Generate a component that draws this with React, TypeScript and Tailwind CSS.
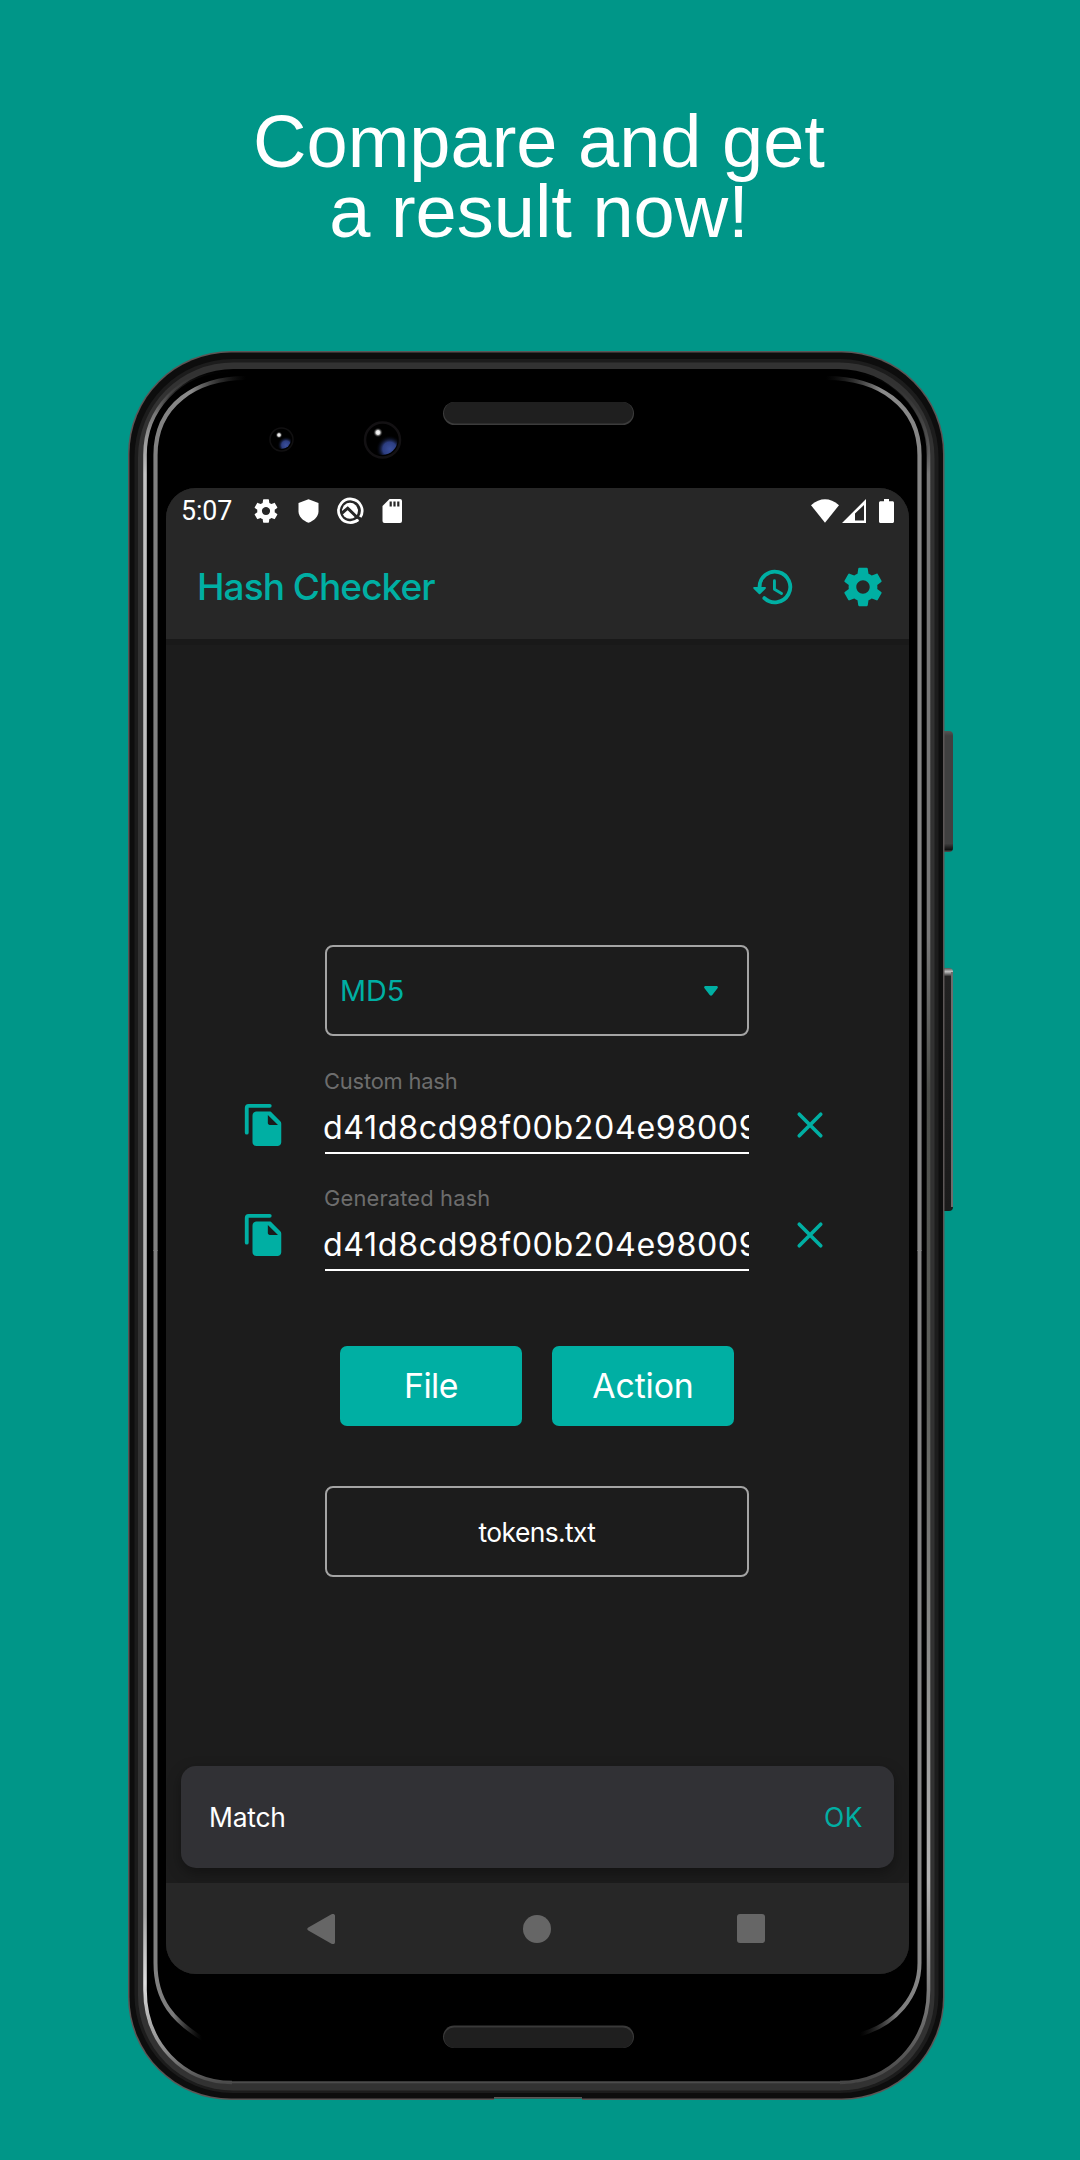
import type { ReactNode } from "react";

const GEAR =
  "M19.43 12.98c.04-.32.07-.64.07-.98s-.03-.66-.07-.98l2.11-1.65c.19-.15.24-.42.12-.64l-2-3.46c-.12-.22-.39-.3-.61-.22l-2.49 1c-.52-.4-1.08-.73-1.69-.98l-.38-2.65C14.46 2.18 14.25 2 14 2h-4c-.25 0-.46.18-.49.42l-.38 2.65c-.61.25-1.17.59-1.69.98l-2.49-1c-.23-.09-.49 0-.61.22l-2 3.46c-.13.22-.07.49.12.64l2.11 1.65c-.04.32-.07.65-.07.98s.03.66.07.98l-2.11 1.65c-.19.15-.24.42-.12.64l2 3.46c.12.22.39.3.61.22l2.49-1c.52.4 1.08.73 1.69.98l.38 2.65c.03.24.24.42.49.42h4c.25 0 .46-.18.49-.42l.38-2.65c.61-.25 1.17-.59 1.69-.98l2.49 1c.23.09.49 0 .61-.22l2-3.46c.12-.22.07-.49-.12-.64l-2.11-1.65zM12 15.5c-1.93 0-3.5-1.57-3.5-3.5s1.57-3.5 3.5-3.5 3.5 1.57 3.5 3.5-1.57 3.5-3.5 3.5z";

function Icon({ className, children }: { className: string; children: ReactNode }) {
  return (
    <svg viewBox="0 0 24 24" fill="currentColor" className={`shrink-0 ${className}`}>
      {children}
    </svg>
  );
}

function HistoryIcon() {
  return (
    <Icon className="size-[46px]">
      <path d="M5 12.2a8 8 0 1 1 2.5 5.6" fill="none" stroke="currentColor" strokeWidth="2" strokeLinecap="round" />
      <path d="M2.2 12h5.6c.45 0 .67.54.35.85l-2.8 2.8a.5.5 0 0 1-.7 0l-2.8-2.8c-.32-.31-.1-.85.35-.85z" />
      <path d="M12.75 8.7v4.5l3.7 2.2" fill="none" stroke="currentColor" strokeWidth="1.5" strokeLinecap="round" strokeLinejoin="round" />
    </Icon>
  );
}

function CopyIcon() {
  return (
    <Icon className="size-[46px]">
      <path d="M3 16V3a1 1 0 0 1 1-1h11" fill="none" stroke="currentColor" strokeWidth="2" strokeLinecap="round" />
      <path
        fillRule="evenodd"
        d="M15.2 5H8c-1.100 0-2 .9-2 2v14c0 1.100.9 2 2 2h11c1.100 0 2-.9 2-2V11.200c0-.4-.2-.8-.5-1.100l-4.400-4.500c-.3-.4-.6-.6-.9-.6zM14 11V6.800L19.300 12H15c-.55 0-1-.45-1-1z"
      />
    </Icon>
  );
}

function CloseIcon() {
  return (
    <Icon className="size-[46px]">
      <path d="M6.400 6.400l11.200 11.200M17.600 6.400L6.400 17.600" fill="none" stroke="currentColor" strokeWidth="1.900" strokeLinecap="round" />
    </Icon>
  );
}

/* Phone body: nested rounded shells, edge reflections, cameras, speakers and side keys. */
function PhoneBody() {
  return (
    <svg viewBox="0 0 826 1749" className="absolute top-0 left-0 h-[1749px] w-[826px]">
      <defs>
        <linearGradient id="rimL" x1="0" y1="20" x2="0" y2="1735" gradientUnits="userSpaceOnUse">
          <stop offset="0" stopColor="#333" stopOpacity="0" />
          <stop offset="0.025" stopColor="#777" />
          <stop offset="0.06" stopColor="#c4c4c4" />
          <stop offset="0.9" stopColor="#a8a8a8" />
          <stop offset="0.94" stopColor="#dedede" />
          <stop offset="0.98" stopColor="#888" />
          <stop offset="1" stopColor="#444" />
        </linearGradient>
        <linearGradient id="rimR" x1="0" y1="20" x2="0" y2="1735" gradientUnits="userSpaceOnUse">
          <stop offset="0" stopColor="#333" stopOpacity="0" />
          <stop offset="0.06" stopColor="#777" />
          <stop offset="0.33" stopColor="#777" />
          <stop offset="0.42" stopColor="#4a4c48" />
          <stop offset="0.6" stopColor="#5e605c" />
          <stop offset="0.88" stopColor="#b4b4b4" />
          <stop offset="0.95" stopColor="#777" />
          <stop offset="1" stopColor="#444" />
        </linearGradient>
        <linearGradient id="glassL" x1="27" y1="0" x2="118" y2="0" gradientUnits="userSpaceOnUse">
          <stop offset="0" stopColor="#808080" />
          <stop offset="0.4" stopColor="#8a8a8a" />
          <stop offset="1" stopColor="#333" stopOpacity="0" />
        </linearGradient>
        <linearGradient id="glassR" x1="790" y1="0" x2="698" y2="0" gradientUnits="userSpaceOnUse">
          <stop offset="0" stopColor="#868686" />
          <stop offset="0.4" stopColor="#8a8a8a" />
          <stop offset="1" stopColor="#333" stopOpacity="0" />
        </linearGradient>
        <linearGradient id="glassBL" x1="27" y1="0" x2="74" y2="0" gradientUnits="userSpaceOnUse">
          <stop offset="0" stopColor="#808080" />
          <stop offset="0.4" stopColor="#7a7a7a" />
          <stop offset="1" stopColor="#333" stopOpacity="0" />
        </linearGradient>
        <linearGradient id="glassBR" x1="792" y1="0" x2="732" y2="0" gradientUnits="userSpaceOnUse">
          <stop offset="0" stopColor="#868686" />
          <stop offset="0.4" stopColor="#7a7a7a" />
          <stop offset="1" stopColor="#333" stopOpacity="0" />
        </linearGradient>
        <radialGradient id="lens" cx="0.74" cy="0.8" r="0.46">
          <stop offset="0" stopColor="#3a4f9c" />
          <stop offset="0.5" stopColor="#2c3d80" />
          <stop offset="1" stopColor="#000" stopOpacity="0" />
        </radialGradient>
        <radialGradient id="glint">
          <stop offset="0" stopColor="#fff" />
          <stop offset="0.4" stopColor="#ddd" />
          <stop offset="1" stopColor="#000" stopOpacity="0" />
        </radialGradient>
        <linearGradient id="keyTop" x1="0" y1="0" x2="0" y2="1">
          <stop offset="0" stopColor="#555" />
          <stop offset="0.04" stopColor="#404040" />
          <stop offset="0.93" stopColor="#404040" />
          <stop offset="0.98" stopColor="#111" />
          <stop offset="1" stopColor="#555" />
        </linearGradient>
        <linearGradient id="keyLow" x1="0" y1="0" x2="0" y2="1">
          <stop offset="0" stopColor="#555" />
          <stop offset="0.015" stopColor="#c0c0c0" />
          <stop offset="0.035" stopColor="#222" />
          <stop offset="1" stopColor="#1b1b1b" />
        </linearGradient>
      </defs>

      <rect x="808" y="380" width="17" height="121" rx="4" fill="url(#keyTop)" />
      <rect x="808" y="617" width="17" height="243" rx="4" fill="url(#keyLow)" />
      <path d="M824 621v235" stroke="#6c6c6c" strokeWidth="2" />

      <rect width="816.500" height="1749" rx="103" fill="#5c5656" />
      <rect x="1.500" y="1.500" width="813.500" height="1746" rx="101.500" fill="#0d0d0d" />
      <rect x="6.500" y="8" width="804" height="1734" rx="98" fill="#1c1c1c" />
      <rect x="10" y="11.500" width="796.500" height="1728" rx="95" fill="#323232" />
      <rect x="15.500" y="18" width="785" height="1715" rx="90" fill="#000" />
      <path
        d="M100 19.500C50 21 17 60 17 104V1639C17 1692 55 1731.500 104 1731.500"
        fill="none"
        stroke="url(#rimL)"
        strokeWidth="3.600"
      />
      <path
        d="M716 19.500C766 21 800.500 60 800.500 104V1639C800.500 1692 762 1731.500 712 1731.500"
        fill="none"
        stroke="url(#rimR)"
        strokeWidth="3.600"
      />
      <path d="M104 1731.500H712" stroke="#4c4c4c" strokeWidth="2.500" />
      <path d="M118 27C68 27 27.500 54 27.500 104V900" fill="none" stroke="url(#glassL)" strokeWidth="4.200" />
      <path d="M27.500 899V1612C27.500 1650 45 1670 78 1690" fill="none" stroke="url(#glassBL)" strokeWidth="4" />
      <path d="M698 27C750 27 791.500 54 791.500 104V900" fill="none" stroke="url(#glassR)" strokeWidth="4.200" />
      <path d="M791.500 899V1612C791.500 1645 768 1674 730 1684" fill="none" stroke="url(#glassBR)" strokeWidth="4" />

      <rect x="366" y="1747.500" width="88" height="1.500" fill="#009688" />
      <path d="M366 1746.700H454" stroke="#5c5656" strokeWidth="1.500" />

      <rect x="315" y="51" width="191" height="23" rx="11.500" fill="#3c3c3c" />
      <rect x="316" y="51" width="189" height="21.500" rx="10.700" fill="#1f1f1f" />
      <rect x="315" y="1674.500" width="191" height="22.500" rx="11.200" fill="#393939" />
      <rect x="316" y="1676.500" width="189" height="20.500" rx="10.200" fill="#1f1f1f" />

      <circle cx="153.500" cy="88.500" r="11.500" fill="#000" stroke="#111011" strokeWidth="1.500" />
      <circle cx="153.500" cy="88.500" r="9.500" fill="url(#lens)" />
      <circle cx="151" cy="84" r="3.500" fill="url(#glint)" />
      <circle cx="254.500" cy="89" r="17.500" fill="#000" stroke="#131113" strokeWidth="2.500" />
      <circle cx="254.500" cy="89" r="15" fill="url(#lens)" />
      <circle cx="250" cy="81.500" r="5" fill="url(#glint)" />
    </svg>
  );
}

function StatusBar() {
  return (
    <div className="flex h-[46px] items-center pl-[15px] text-white">
      <span className="w-[72px] font-[Roboto] text-[26.800px] leading-none tracking-[-0.100px]">5:07</span>
      <Icon className="size-[28px] -ml-[1px]">
        <path d={GEAR} />
      </Icon>
      <svg viewBox="0 0 21 24" className="ml-[18px] h-[24px] w-[21px]" fill="currentColor">
        <path d="M10.500.3L20.500 4v8.500c0 5-4.500 9.300-10 11.200C5 21.800.500 17.500.500 12.500V4z" />
      </svg>
      <svg viewBox="0 0 28 28" className="ml-[17px] h-[28px] w-[28px]" fill="none">
        <path d="M22.500 22.300a11.800 11.800 0 1 1 1.800-2.200" stroke="#fff" strokeWidth="2.700" />
        <circle cx="14" cy="13.800" r="8" fill="#fff" />
        <path d="M5.500 16.500l6.200-5.300 12.300 12" stroke="#272727" strokeWidth="3" />
        <path d="M19.500 24.500l3-1.600" stroke="#fff" strokeWidth="2.500" />
      </svg>
      <svg viewBox="0 0 20 24" className="ml-[18px] h-[24px] w-[20px]" fill="currentColor">
        <path d="M7.500 0H18a2 2 0 0 1 2 2v20a2 2 0 0 1-2 2H2.500a2 2 0 0 1-2-2V7z" />
        <path d="M8.700 2.500v5M12.500 2.500v5M16.300 2.500v5" stroke="#272727" strokeWidth="2.200" />
      </svg>
      <svg viewBox="0 0 28 24" className="ml-auto h-[24px] w-[28px]" fill="currentColor">
        <path d="M0 6.200Q14-5.500 28 6.200L14 23.700z" />
      </svg>
      <svg viewBox="0 0 24 24" className="ml-[3px] h-[24px] w-[24px]" fill="currentColor">
        <path fillRule="evenodd" d="M24 0v24H0zM22 6l-9 8.500V21.500h9z" />
      </svg>
      <svg viewBox="0 0 15 24" className="mr-[15px] ml-[13px] h-[24px] w-[15px]" fill="currentColor">
        <path d="M5 0h5v2.200h3.500c.8 0 1.500.7 1.500 1.500v18.800c0 .8-.7 1.500-1.500 1.500h-12c-.8 0-1.500-.7-1.500-1.500V3.700c0-.8.700-1.500 1.500-1.500H5z" />
      </svg>
    </div>
  );
}

function HashRow({ label, iconTop }: { label: ReactNode; iconTop: string }) {
  return (
    <div className="flex h-[87px] gap-[38px] pl-[75px] text-[#00afa3]">
      <div className={iconTop}>
        <CopyIcon />
      </div>
      <div className="w-[424px] border-b-[2.500px] border-white">
        {label}
        <div className="mt-[11px] -ml-[2px] h-[44px] overflow-hidden text-[32.200px] leading-[44px] tracking-[0.620px] whitespace-nowrap text-white">
          d41d8cd98f00b204e98009
        </div>
      </div>
      <div className={iconTop}>
        <CloseIcon />
      </div>
    </div>
  );
}

export default function App() {
  return (
    <div className="h-[2160px] w-[1080px] overflow-hidden bg-[#009688]">
      <h1 className="-ml-[2px] pt-[107px] text-center font-['Liberation_Sans',sans-serif] text-[74px] leading-[70px] text-white">
        Compare and get
        <br />a result now!
      </h1>

      <div className="relative mt-[104px] ml-[128px] h-[1749px] w-[826px] pt-[137px] pl-[38px]">
        <PhoneBody />

        <div className="relative flex h-[1486px] w-[743px] flex-col overflow-hidden rounded-[30px] bg-[#1c1c1c] font-[Inter,sans-serif]">
          <header className="bg-[#272727]">
            <StatusBar />
            <div className="flex h-[105px] items-center pr-[23px] pl-[31px] text-[#00afa3]">
              <span className="pb-[1px] text-[37px] leading-none tracking-[-0.950px] [font-weight:450]">Hash Checker</span>
              <div className="ml-auto flex gap-[44.500px]">
                <HistoryIcon />
                <Icon className="size-[46px]">
                  <path d={GEAR} />
                </Icon>
              </div>
            </div>
          </header>
          <div className="h-[6px] shrink-0 bg-[#191919]" />

          <div className="mt-[300px] ml-[159px] flex h-[91px] w-[424px] shrink-0 items-center justify-between rounded-[8px] border-2 border-[#a4a4a4] pr-[29px] pl-[13px] text-[#00afa3]">
            <span className="pt-[1px] text-[28.800px] leading-none">MD5</span>
            <svg viewBox="0 0 14 10" className="h-[10px] w-[14px]" fill="currentColor">
              <path d="M1.500 0h11c1.200 0 1.800 1.300 1 2.300L8.300 9a1.700 1.700 0 0 1-2.600 0L.500 2.300C-.300 1.300.300 0 1.500 0z" />
            </svg>
          </div>

          <div className="mt-[31px]">
            <HashRow
              iconTop="pt-[35px]"
              label={<div className="-ml-px h-[28px] text-[21.900px] leading-[28px] tracking-[-0.200px] text-[#6d6d6d]">Custom hash</div>}
            />
          </div>
          <div className="mt-[30px]">
            <HashRow
              iconTop="pt-[27.500px]"
              label={<div className="-ml-px h-[28px] text-[21.900px] leading-[28px] tracking-[0.150px] text-[#6d6d6d]">Generated hash</div>}
            />
          </div>

          <div className="mt-[75px] ml-[174px] flex gap-[30px] text-[33.800px] leading-none text-white">
            <button className="h-[80px] w-[182px] rounded-[7px] bg-[#00afa3] tracking-[-0.500px]">File</button>
            <button className="h-[80px] w-[182px] rounded-[7px] bg-[#00afa3] tracking-[-0.100px]">Action</button>
          </div>

          <div className="mt-[60px] ml-[159px] flex h-[91px] w-[424px] shrink-0 items-center justify-center rounded-[8px] border-2 border-[#a4a4a4] pt-[1px] text-[26.400px] leading-none tracking-[-0.600px] text-white">
            tokens.txt
          </div>

          <div className="mx-[15px] mt-auto mb-[15px] flex h-[102px] items-center justify-between rounded-[15px] bg-[#313135] pr-[31px] pl-[28px] text-[26.400px] leading-none shadow-[0_5px_14px_rgba(0,0,0,0.35)]">
            <span className="tracking-[-0.200px] text-white">Match</span>
            <span className="tracking-[0.600px] text-[#00afa3]">OK</span>
          </div>

          <nav className="relative flex h-[91px] shrink-0 items-center bg-[#272727] pl-[141px] text-[#666]">
            <svg viewBox="0 0 28 32" className="h-[32px] w-[28px]" fill="currentColor">
              <path d="M24.500 1.300C26 .4 28 1 28 2.800v26.400c0 1.800-2 2.400-3.500 1.500L1.300 17.500c-1.400-.8-1.400-2.200 0-3z" />
            </svg>
            <div className="ml-[188px] size-[28px] rounded-full bg-[#666]" />
            <div className="ml-[185.500px] size-[28.500px] rounded-[3px] bg-[#666]" />
          </nav>
        </div>
      </div>
    </div>
  );
}
